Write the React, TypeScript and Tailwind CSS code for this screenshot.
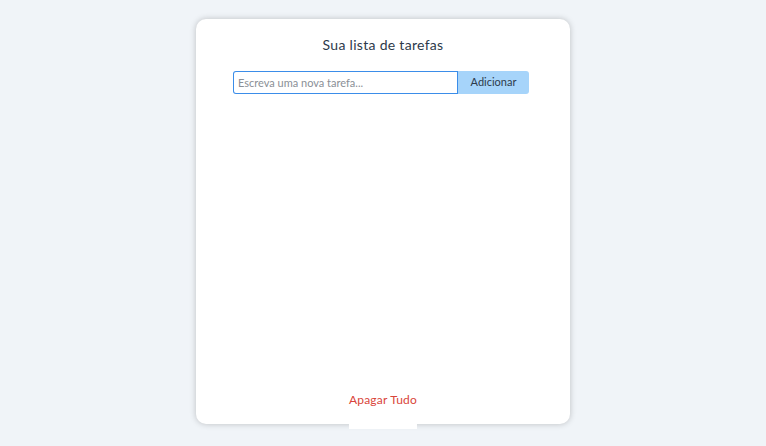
import { useState } from "react";

export default function App() {
  const [tasks, setTasks] = useState<string[]>([]);
  const [text, setText] = useState("");

  const add = () => {
    if (!text.trim()) return;
    setTasks((t) => [...t, text.trim()]);
    setText("");
  };

  return (
    <div
      className="min-h-[446px] w-full bg-[#f0f4f8] flex justify-center pt-[19px]"
      style={{ fontFamily: "'Lato', 'Noto Sans', sans-serif" }}
    >
      <div className="relative w-[374px] h-[405px] bg-white rounded-[10px] shadow-[0_0_6px_rgba(0,0,0,0.22)] flex flex-col items-center">
        <h1 className="mt-[16px] text-[14px] leading-[20px] text-[#2d3a4b] tracking-[0.3px]">
          Sua lista de tarefas
        </h1>

        <div className="mt-[16px] self-start ml-[37px] flex w-[296px]">
          <input
            type="text"
            value={text}
            onChange={(e) => setText(e.target.value)}
            placeholder="Escreva uma nova tarefa..."
            className="w-[225px] h-[23px] px-[5px] text-[11px] text-[#333] placeholder-[#8a8f96] bg-white rounded-l-[3px] ring-1 ring-inset ring-[#3b8de9] outline-none"
          />
          <button
            onClick={add}
            className="w-[71px] h-[23px] bg-[#a6d4fa] text-[11px] text-[#2d3a4b] rounded-r-[3px]"
          >
            Adicionar
          </button>
        </div>

        <ul className="flex-1 w-[296px] mt-2 text-[12px] text-[#2d3a4b]">
          {tasks.map((t, i) => (
            <li key={i} className="py-1 border-b border-gray-100">
              {t}
            </li>
          ))}
        </ul>

        <button
          onClick={() => setTasks([])}
          className="absolute left-1/2 -translate-x-1/2 top-[371px] bg-white pt-[3px] pb-[22px] px-0 text-[12px] leading-[14px] text-[#d9443a] tracking-[0.2px]"
        >
          Apagar Tudo
        </button>
      </div>
    </div>
  );
}
